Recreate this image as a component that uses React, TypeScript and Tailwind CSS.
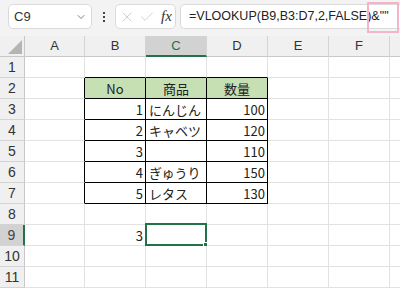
import { ChevronDown, X, Check } from 'lucide-react';

const COLS = ['A', 'B', 'C', 'D', 'E', 'F', 'G'];
const ROWS = [1, 2, 3, 4, 5, 6, 7, 8, 9, 10, 11];

type Cell = { text: string; align: 'left' | 'right' | 'center' };

// sheet contents keyed by "C9" style address
const DATA: Record<string, Cell> = {
  B2: { text: 'No', align: 'center' },
  C2: { text: '商品', align: 'center' },
  D2: { text: '数量', align: 'center' },
  B3: { text: '1', align: 'right' },
  C3: { text: 'にんじん', align: 'left' },
  D3: { text: '100', align: 'right' },
  B4: { text: '2', align: 'right' },
  C4: { text: 'キャベツ', align: 'left' },
  D4: { text: '120', align: 'right' },
  B5: { text: '3', align: 'right' },
  D5: { text: '110', align: 'right' },
  B6: { text: '4', align: 'right' },
  C6: { text: 'ぎゅうり', align: 'left' },
  D6: { text: '150', align: 'right' },
  B7: { text: '5', align: 'right' },
  C7: { text: 'レタス', align: 'left' },
  D7: { text: '130', align: 'right' },
  B9: { text: '3', align: 'right' },
};

const inTable = (col: number, row: number) => col >= 1 && col <= 3 && row >= 2 && row <= 7;

const SheetCell = ({ col, row }: { col: number; row: number }) => {
  const addr = `${COLS[col]}${row}`;
  const cell = DATA[addr];
  const blackRight = inTable(col, row) || inTable(col + 1, row);
  const blackBottom = inTable(col, row) || inTable(col, row + 1);
  const isHeader = row === 2 && inTable(col, row);
  const selected = addr === 'C9';

  return (
    <div
      className={`relative flex items-center border-r border-b text-[13px] leading-none text-[#222] ${
        blackRight ? 'border-r-black' : 'border-r-[#e2e2e2]'
      } ${blackBottom ? 'border-b-black' : 'border-b-[#e2e2e2]'} ${isHeader ? 'bg-[#c6e0b4]' : 'bg-white'} ${
        cell?.align === 'right' ? 'justify-end pr-[2px]' : cell?.align === 'center' ? 'justify-center' : 'justify-start pl-[3px]'
      }`}
    >
      {cell && <span className="whitespace-nowrap">{cell.text}</span>}
      {selected && (
        <div className="absolute -left-[1px] -top-[2px] right-[-1px] bottom-[-1px] border-2 border-[#217346]">
          <div className="absolute -right-[4px] -bottom-[4px] w-[6px] h-[6px] bg-[#217346] border border-white" />
        </div>
      )}
    </div>
  );
};

export default function App() {
  return (
    <div className="w-[400px] h-[288px] overflow-hidden bg-white relative font-['Noto_Sans_CJK_JP',sans-serif]">
      {/* Formula bar */}
      <div className="h-[36px] bg-[#f3f3f3] flex items-start pt-[4px] pl-[8px] gap-[4px]">
        <div className="w-[84px] h-[25px] bg-white border border-[#dadada] rounded-[5px] flex items-center justify-between pl-[5px] pr-[4px]">
          <span className="text-[13px] text-[#333] font-['Liberation_Sans',sans-serif]">C9</span>
          <ChevronDown className="w-[12px] h-[12px] text-[#555]" strokeWidth={1.5} />
        </div>
        <div className="w-[15px] h-[25px] flex flex-col items-center justify-center gap-[2px]">
          <div className="w-[2px] h-[2px] bg-[#444]" />
          <div className="w-[2px] h-[2px] bg-[#444]" />
          <div className="w-[2px] h-[2px] bg-[#444]" />
        </div>
        <div className="w-[61px] h-[25px] bg-white border border-[#dadada] rounded-[5px] flex items-center pl-[3px] gap-[4px]">
          <X className="w-[16px] h-[16px] text-[#c4c4c4]" strokeWidth={1.2} />
          <Check className="w-[16px] h-[16px] text-[#c4c4c4]" strokeWidth={1.2} />
          <span className="ml-[2px] text-[15px] italic font-['Liberation_Serif',serif] text-[#333]">fx</span>
        </div>
        <div className="flex-1 h-[25px] bg-white border border-[#dadada] border-r-0 rounded-l-[5px] flex items-center pl-[8px]">
          <span className="text-[12.5px] text-[#222] whitespace-nowrap font-['Liberation_Sans',sans-serif]">
            =VLOOKUP(B9,B3:D7,2,FALSE)&amp;""
          </span>
        </div>
      </div>

      {/* annotation box around &"" */}
      <div className="absolute left-[367px] top-[2px] w-[32px] h-[31px] border-2 border-[#f6b4c9]" />

      {/* Grid */}
      <div className="grid grid-cols-[25px_60px_61px_61px_61px_61px_61px_61px] auto-rows-[21px] text-[#333]">
        <div className="relative bg-[#f0f0f0] border-r border-b border-[#c8c8c8]">
          <svg className="absolute left-[8px] top-[4px]" width="14" height="14" viewBox="0 0 14 14">
            <polygon points="14,0 14,14 0,14" fill="#b5b5b5" />
          </svg>
        </div>
        {COLS.map((c) => (
          <div
            key={c}
            className={`flex items-center justify-center text-[13px] font-['Liberation_Sans',sans-serif] border-r border-[#d4d4d4] ${
              c === 'C'
                ? 'bg-[#d2d2d2] text-[#217346] border-b-2 border-b-[#217346]'
                : 'bg-[#f0f0f0] border-b border-b-[#c8c8c8]'
            }`}
          >
            {c === 'G' ? '' : c}
          </div>
        ))}

        {ROWS.map((r) => (
          <div key={r} className="contents">
            <div
              className={`flex items-center justify-center text-[14px] font-['Liberation_Sans',sans-serif] border-b border-b-[#d4d4d4] ${
                r === 9
                  ? 'bg-[#d2d2d2] text-[#444] border-r-2 border-r-[#217346]'
                  : 'bg-[#f0f0f0] border-r border-r-[#c8c8c8]'
              }`}
            >
              {r}
            </div>
            {COLS.map((_, ci) => (
              <SheetCell key={ci} col={ci} row={r} />
            ))}
          </div>
        ))}
      </div>
    </div>
  );
}
